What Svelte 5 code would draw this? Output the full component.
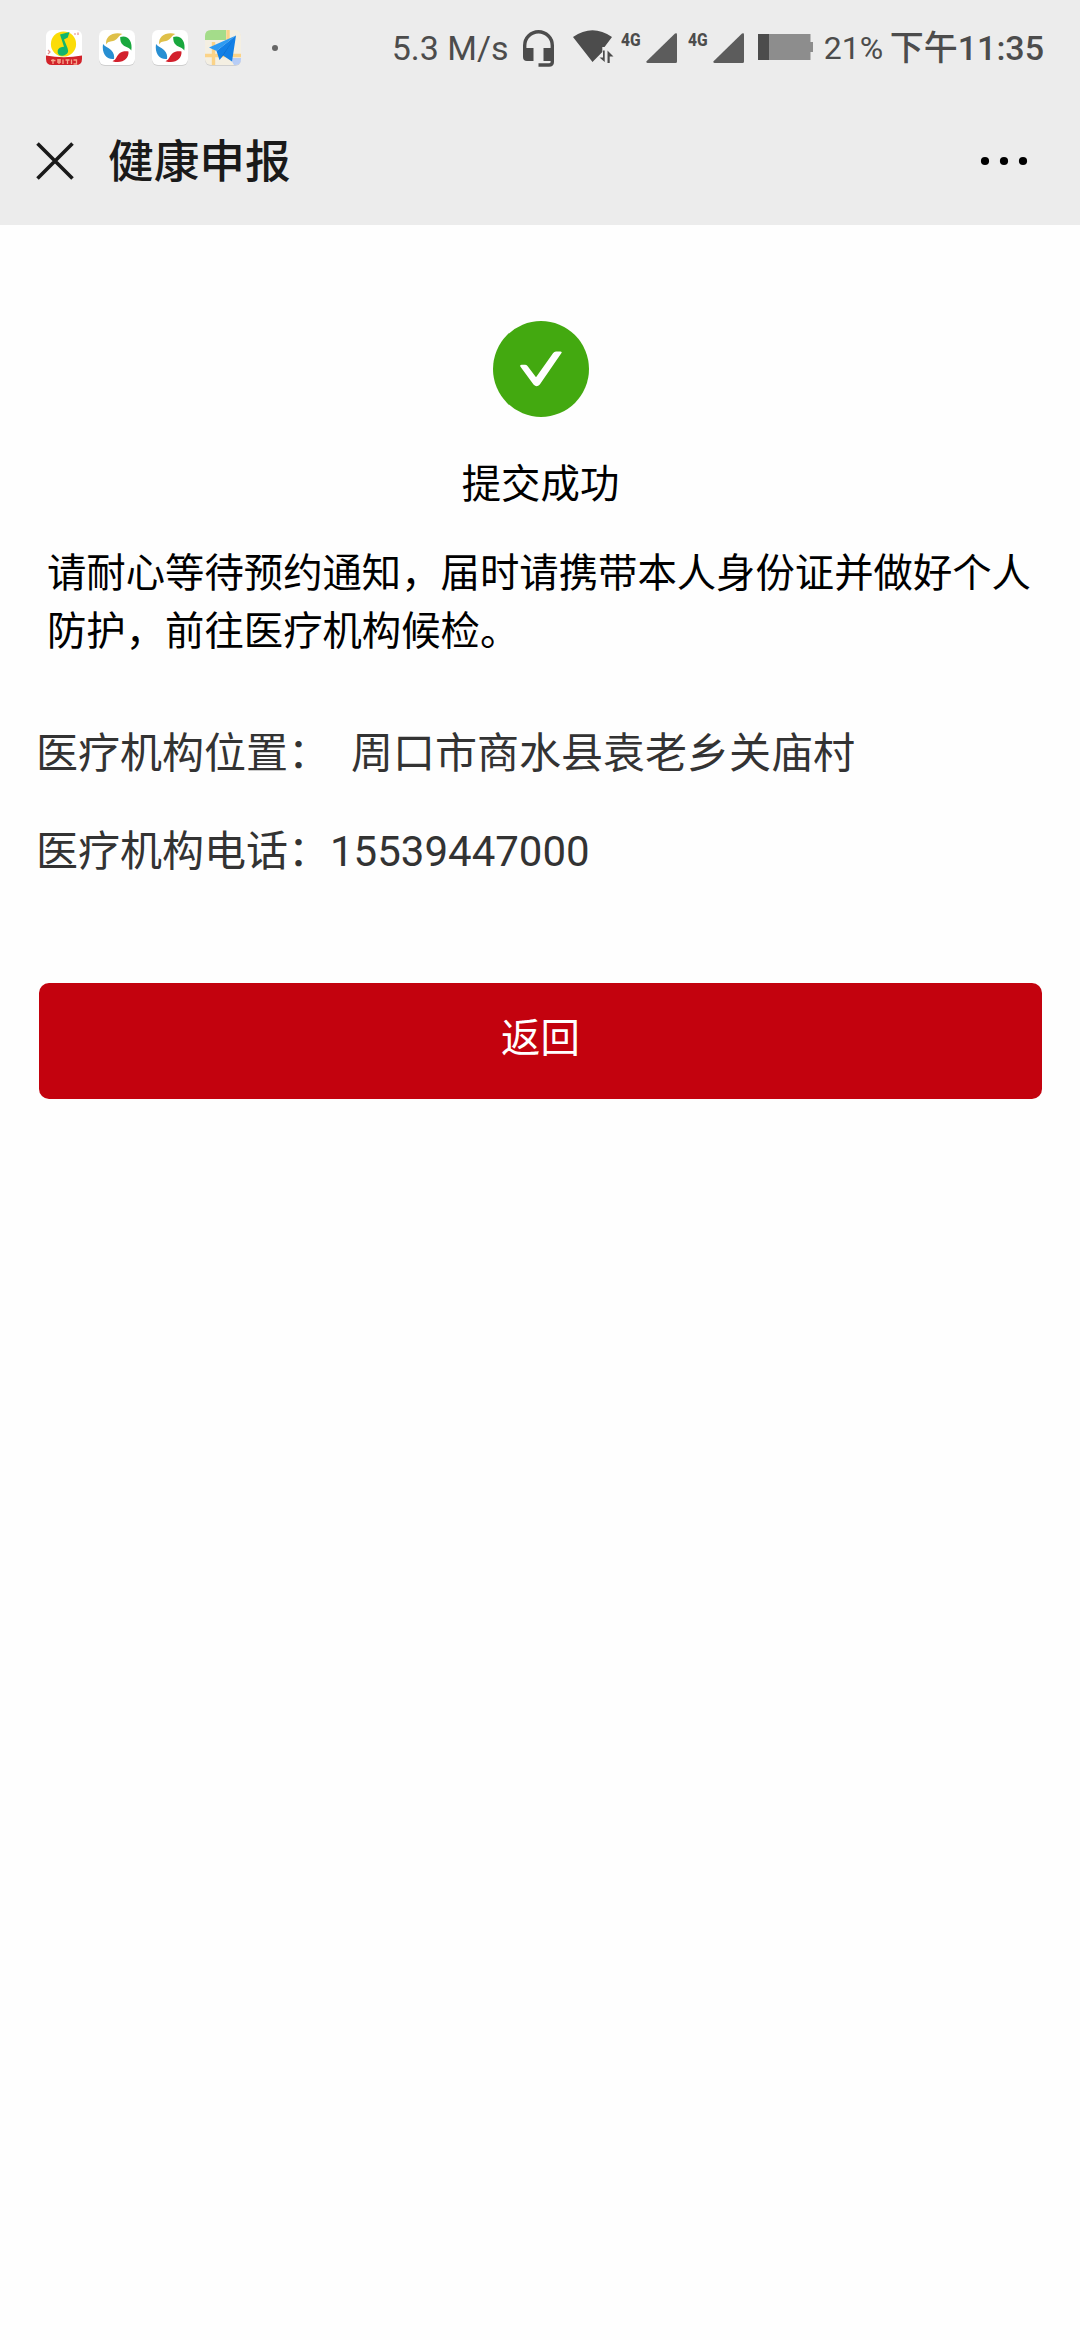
<script>
  const title = "健康申报";
  const address = "周口市商水县袁老乡关庙村";
  const phone = "15539447000";

  const browserIcons = [1, 2];
</script>

{#snippet signal()}
  <span class="network">4G</span>
  <svg class="signal" width="31" height="30" viewBox="0 0 31 30">
    <path d="M1.5 30 Q-.6 29.5 .8 28 L29 .6 Q31 -.6 31 1.5 V28.5 Q31 30 29.5 30 Z" />
  </svg>
{/snippet}

<div class="screen">
  <header>
    <div class="status-bar">
      <div class="notifications">
        <svg width="36" height="36" viewBox="0 0 36 36">
          <rect width="36" height="35" rx="6" fill="#fff" />
          <circle cx="17.5" cy="14" r="12.6" fill="#fbdc08" />
          <path d="M14 4.500 L23.5 2 L21.800 7.500 L18 9.500 L21.500 18 Q23.500 23.500 18.500 25.200 Q13 27 11.700 22.700 Q11 18 16 17 L18 16.800 Z" fill="#12b56b" />
          <path d="M0 25.5 Q18 29 36 25.5 V29 Q36 35 30 35 H6 Q0 35 0 29 Z" fill="#d2232a" />
          <path d="M5 30.500 H9.500 M7 29 V34 M11 30 H15 M11 32 H15 M13 29 V34 M17 29.500 V34 M19.500 30 H23.500 M21.500 30 V34 M25.500 29.500 V34 M27.500 30 H30.500 V34 H27.500" stroke="#f6a58c" stroke-width="1.3" fill="none" />
          <path d="M28 4 H30 M32 2.5 V5 M2 20 L4 22 L2 24" stroke="#e58b86" stroke-width="1.2" fill="none" />
        </svg>
        {#each browserIcons as icon (icon)}
          <svg width="36" height="36" viewBox="0 0 36 36">
            <rect y="1" width="36" height="35" rx="6" fill="#cfcfcf" />
            <rect width="36" height="35" rx="6" fill="#fff" />
            <path d="M7.2 14.5 C6 6.5 14 1.5 23.5 4 C20 5 19 9 15.5 10.5 C11.5 11.8 9 11 7.2 14.5 Z" fill="#dfc049" />
            <path d="M21.2 7 C28.5 4.5 34 11 32.3 20.5 C30.5 17.5 27 17.5 24.3 15.3 C21.5 13 21.2 10 21.2 7 Z" fill="#19a83e" />
            <path d="M29.5 21.5 C30 29 23 34.2 13.5 31.2 C17 30 17 27 20 23.8 C23 21 27 21 29.5 21.5 Z" fill="#d3202c" />
            <path d="M15 29 C8 30 2.5 24 4 14 C6 17 9 17.2 12 20 C15 22.8 15.5 26 15 29 Z" fill="#288fd2" />
          </svg>
        {/each}
        <svg width="36" height="36" viewBox="0 0 36 36">
          <rect y="1" width="36" height="35" rx="6" fill="#d0d0d0" />
          <rect width="36" height="35" rx="6" fill="#f4efe2" />
          <path d="M6 0 H21 V10 H0 V6 Q0 0 6 0 Z" fill="#a4dc8a" />
          <path d="M25 28 H36 V29 Q36 35 30 35 H29 Z" fill="#b7cdf6" />
          <path d="M0 25.5 H36 M8.5 12 V35 M23 0 V10" stroke="#fbd388" stroke-width="3.4" />
          <path d="M31 5.5 L4 17.5 L11.5 21 Z" fill="#2f9bf2" />
          <path d="M31 5.5 L11.5 21 L14.5 30 L18 25.5 L27 31.5 Z" fill="#1380e6" />
          <path d="M31 5.5 L14.5 30 L18 25.5 Z" fill="#0a5fba" />
        </svg>
        <span class="more-dot"></span>
      </div>

      <div class="system">
        <span class="speed">5.3 M/s</span>
        <svg class="headset" width="31" height="37" viewBox="0 0 31 37">
          <path d="M1.7 20 V15.5 A13.8 13.8 0 0 1 29.3 15.5 V32 Q29.3 35 26 35 H15.5" fill="none" stroke="#4c4c4c" stroke-width="3.4" />
          <path d="M0 18 H10.5 V31 H4 Q0 31 0 27 Z M20.5 18 H31 V31 H20.5 Z" fill="#4c4c4c" />
        </svg>
        <svg class="wifi" width="41" height="34" viewBox="0 0 41 34">
          <path d="M0 7 Q19.5 -6.5 39 7 L31.5 17 H29.3 V22 L19.5 32 Z" fill="#4c4c4c" />
          <path d="M31.7 20.5 V32 L26.5 27.5 H30 V20.5 Z M34.5 33 V20.5 L40.5 26.5 H36.7 V33 Z" fill="#4c4c4c" />
        </svg>
        {@render signal()}
        {@render signal()}
        <svg class="battery" width="55" height="26" viewBox="0 0 55 26">
          <path d="M0 0 H52.5 V8 H55 V18 H52.5 V26 H0 Z" fill="#8d8d8d" />
          <rect width="11" height="26" fill="#4c4c4c" />
        </svg>
        <span class="percent">21%</span>
        <span class="time">下午11:35</span>
      </div>
    </div>

    <nav>
      <button class="icon-btn" aria-label="关闭">
        <svg width="38" height="38" viewBox="0 0 38 38">
          <path d="M1.5 1.5 L36.5 36.5 M36.5 1.5 L1.5 36.5" stroke="#1a1a1a" stroke-width="3.6" />
        </svg>
      </button>
      <h1>{title}</h1>
      <button class="icon-btn menu" aria-label="更多">
        <svg width="48" height="10" viewBox="0 0 48 10">
          <circle cx="5" cy="5" r="4.1" />
          <circle cx="24" cy="5" r="4.1" />
          <circle cx="43" cy="5" r="4.1" />
        </svg>
      </button>
    </nav>
  </header>

  <main>
    <svg class="success" width="96" height="96" viewBox="0 0 96 96">
      <circle cx="48" cy="48" r="48" fill="#43a910" />
      <path d="M27.300 45.500 Q26.500 43.700 28.500 43.700 H32 Q33.500 43.700 34.500 45 L43 56.300 L60 32.200 Q61.200 30.500 63 30.500 H67.500 Q69.500 30.500 68.300 32.200 L46.800 63.500 Q43.700 67 40.500 63.500 Z" fill="#fff" />
    </svg>
    <h2>提交成功</h2>
    <p class="message">请耐心等待预约通知，届时请携带本人身份证并做好个人防护，前往医疗机构候检。</p>

    <div class="info">
      <div>医疗机构位置：<span class="address">{address}</span></div>
      <div>医疗机构电话：{phone}</div>
    </div>

    <button class="back">返回</button>
  </main>
</div>

<style>
  :global(body) {
    background: #fff;
  }

  .screen {
    width: 1080px;
    height: 2340px;
    background: #fefefe;
    font-family: Roboto, "Noto Sans CJK SC", sans-serif;
    overflow: hidden;
  }

  header {
    height: 225px;
    background: #ececec;
  }

  svg {
    display: block;
    flex: none;
  }

  .status-bar {
    display: flex;
    justify-content: space-between;
    height: 96px;
    padding: 0 36px 0 46px;
    box-sizing: border-box;
    color: #4c4c4c;
  }

  .notifications {
    display: flex;
    align-items: center;
    gap: 17px;
  }

  .more-dot {
    width: 6px;
    height: 6px;
    margin-left: 14px;
    border-radius: 50%;
    background: #666;
  }

  .system {
    display: flex;
    align-items: center;
    white-space: nowrap;
  }

  .speed {
    width: 131px;
    font-size: 34px;
  }

  .headset {
    margin-right: 19px;
  }

  .wifi {
    margin: -3px 7px 0 0;
  }

  .network {
    width: 25px;
    margin-top: -17px;
    font-size: 19px;
    font-weight: 800;
    transform: scaleX(0.82);
    transform-origin: left;
  }

  .signal {
    margin-right: 11px;
    fill: #5c5c5c;
  }

  .battery {
    margin: -2px 11px 0 3px;
  }

  .percent {
    width: 66px;
    font-size: 32px;
  }

  .time {
    margin-top: -5px;
    font-size: 34px;
    font-weight: 500;
  }

  nav {
    display: flex;
    align-items: center;
    height: 129px;
    padding: 0 52px 0 36px;
  }

  button {
    border: none;
    padding: 0;
    font-family: inherit;
  }

  .icon-btn {
    background: none;
  }

  .menu {
    margin-left: auto;
  }

  h1 {
    margin: -5px 0 0 34px;
    font-size: 45.7px;
    font-weight: 500;
    color: #1a1a1a;
  }

  main {
    display: flex;
    flex-direction: column;
    padding: 96px 36px 0;
  }

  .success {
    align-self: center;
    margin-left: 2px;
  }

  h2 {
    margin: 39px 0 0 1px;
    font-size: 39.4px;
    font-weight: 400;
    line-height: 58px;
    text-align: center;
    color: #000;
  }

  .message {
    margin: 31px 0 0;
    padding: 0 11px 0 11px;
    font-size: 39.37px;
    line-height: 58px;
    color: #000;
  }

  .info {
    display: flex;
    flex-direction: column;
    gap: 38px;
    margin-top: 63px;
    font-size: 42px;
    line-height: 60px;
    color: #333;
  }

  .address {
    margin-left: 21px;
  }

  .back {
    height: 116px;
    margin: 101px 2px 0 3px;
    padding-bottom: 14px;
    border-radius: 10px;
    background: #c3020e;
    color: #fff;
    font-size: 39.4px;
  }
</style>
